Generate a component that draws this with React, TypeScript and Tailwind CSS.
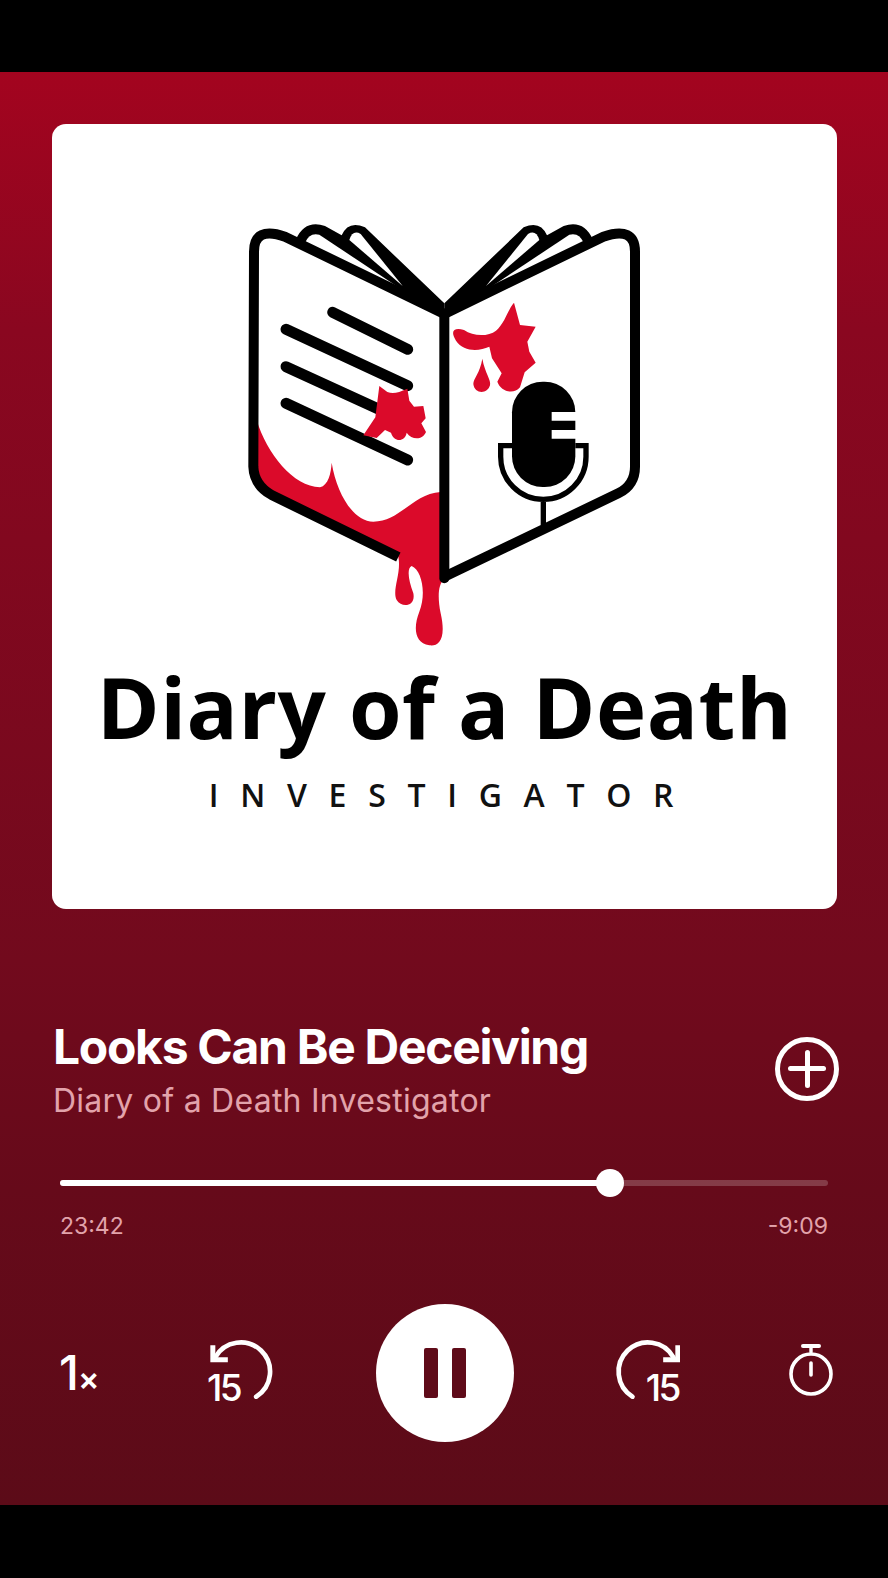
const RED = '#db0a2a';

const BookLogo = () => (
  <svg viewBox="0 0 1290 1320" className="w-[430px] h-[440px] shrink-0">
    {/* fan of pages, drawn on the left and mirrored */}
    {[false, true].map((mirror) => (
      <g key={String(mirror)} transform={mirror ? 'matrix(-1 0 0 1 1286 0)' : undefined}>
        <path d="M198 88 Q225 28 285 48 L335 76 Q355 30 405 52 L643 280 L643 325 L198 105 Z" fill="#000" />
        <path d="M224 100 Q238 66 268 74 L514 238 Z" fill="#fff" />
        <path d="M358 90 Q368 58 392 72 L518 228 Z" fill="#fff" />
      </g>
    ))}
    <path
      d="M643 312 L165 80 Q72 48 72 125 L70 770 Q72 825 125 855 L643 1100 L1165 850 Q1215 825 1215 770 L1215 125 Q1215 48 1120 80 L643 312 Z"
      fill="#fff"
    />
    {/* blood along the bottom of the left page */}
    <path
      d="M80 630 C110 730 190 830 270 832 C295 825 303 790 305 758 C320 850 370 935 430 935 C510 935 550 850 632 846 L640 1110 C625 1125 622 1160 632 1210 C650 1290 625 1310 598 1306 C552 1300 550 1250 568 1205 C590 1150 575 1080 545 1068 C530 1075 535 1110 550 1150 C558 1190 515 1195 500 1170 C485 1140 515 1090 505 1040 L120 855 L75 790 Z"
      fill={RED}
    />
    {/* cover outline, open where the blood runs over the edge */}
    <path
      d="M505 1041 L125 855 Q72 825 70 770 L72 125 Q72 48 165 80 L643 312 L1120 80 Q1215 48 1215 125 L1215 770 Q1215 825 1165 850 L643 1100"
      fill="none"
      stroke="#000"
      strokeWidth="30"
      strokeLinejoin="round"
    />
    <path d="M643 312 L643 1105" stroke="#000" strokeWidth="30" strokeLinecap="round" />
    {/* text lines */}
    <g stroke="#000" strokeWidth="33" strokeLinecap="round">
      <path d="M308 307 L533 418" />
      <path d="M168 358 L533 527" />
      <path d="M168 470 L445 597" />
      <path d="M168 580 L533 750" />
    </g>
    {/* splats */}
    <path
      d="M448 528 L472 546 C490 552 505 548 532 536 L538 572 L552 590 L580 588 L587 625 L574 640 L588 666 C577 692 545 690 530 668 C525 696 492 698 483 668 L465 660 L440 684 L400 676 L436 622 Z"
      fill={RED}
    />
    <path
      d="M852 278 L870 345 L917 350 L892 395 L898 425 L917 458 L884 487 L870 532 C850 556 812 544 802 515 L815 490 L786 445 L778 410 C745 425 700 425 678 392 C658 360 675 352 702 360 C730 380 775 380 798 362 C825 340 835 295 852 278 Z"
      fill={RED}
    />
    <path d="M757 446 C765 490 784 510 780 526 C772 554 733 552 730 522 C730 505 750 490 757 446 Z" fill={RED} />
    {/* microphone */}
    <rect x="846" y="515" width="190" height="316" rx="92" fill="#000" />
    <path d="M965 606 H1040 V632 H965 Z M965 660 H1040 V686 H965 Z" fill="#fff" />
    <path
      d="M846 707 H812 V740 A128 128 0 0 0 1068 740 V707 H1036 M940 868 V945"
      fill="none"
      stroke="#000"
      strokeWidth="16"
    />
  </svg>
);

const SkipIcon = ({ forward = false }: { forward?: boolean }) => (
  <div className="relative w-[67px] h-[65px] shrink-0 mb-[6px] text-white">
    <svg viewBox="0 0 200 195" className="w-full h-full">
      <g fill="none" stroke="currentColor" strokeLinecap="round" strokeLinejoin="miter">
        {forward ? (
          <>
            <path d="M181 58 A88 88 0 1 0 58 176" strokeWidth="14" />
            <path d="M194 22 V65 H150" strokeWidth="15" strokeLinecap="butt" />
          </>
        ) : (
          <>
            <path d="M24 58 A88 88 0 1 1 147 176" strokeWidth="14" />
            <path d="M17 22 V65 H62" strokeWidth="15" strokeLinecap="butt" />
          </>
        )}
      </g>
    </svg>
    <span
      className={`absolute bottom-[-1px] text-[37px] leading-[32px] font-medium tracking-[-2.5px] ${
        forward ? 'right-[1px]' : 'left-0'
      }`}
    >
      15
    </span>
  </div>
);

const TimerIcon = () => (
  <svg viewBox="0 0 46 56" className="w-[46px] h-[56px] shrink-0 mb-[6px]">
    <g fill="none" stroke="#fff" strokeLinecap="round">
      <circle cx="23" cy="32" r="20" strokeWidth="3.6" />
      <path d="M15 4 H31" strokeWidth="4" />
      <path d="M23 4 V10" strokeWidth="3.4" />
      <path d="M23 21 V33" strokeWidth="3.6" />
    </g>
  </svg>
);

export default function App() {
  return (
    <div className="w-[888px] h-[1578px] flex flex-col bg-black font-['Inter',sans-serif] overflow-hidden">
      <div className="h-[72px] shrink-0" />

      <main className="flex-1 flex flex-col bg-[linear-gradient(180deg,#a3041f_0%,#8a0720_18%,#720a1d_62%,#660a1a_78%,#5c0b18_100%)]">
        <div className="mt-[52px] mx-[52px] w-[785px] h-[785px] rounded-[14px] bg-white flex flex-col items-center pt-[86px]">
          <BookLogo />
          <div className="mt-[-4px] font-['Open_Sans',sans-serif] font-bold text-black text-[85px] leading-[120px] tracking-[0.5px] whitespace-nowrap">
            Diary of a Death
          </div>
          <div className="mt-[7px] font-['Open_Sans',sans-serif] font-semibold text-[#111] text-[32px] leading-[44px] tracking-[21.7px] whitespace-nowrap pl-[15px]">
            INVESTIGATOR
          </div>
        </div>

        <div className="mt-[111px] ml-[53px] mr-[49px] flex items-center justify-between">
          <div>
            <div className="text-white font-bold text-[48px] leading-[54px] tracking-[-1.3px] whitespace-nowrap">
              Looks Can Be Deceiving
            </div>
            <div className="mt-[7px] text-[#e2a3ab] text-[32px] leading-[40px] tracking-[0.25px] whitespace-nowrap">
              Diary of a Death Investigator
            </div>
          </div>
          <div className="w-[64px] h-[64px] mb-[4px] rounded-full border-[5px] border-white flex items-center justify-center relative">
            <div className="absolute w-[38px] h-[5px] rounded-full bg-white" />
            <div className="absolute w-[5px] h-[38px] rounded-full bg-white" />
          </div>
        </div>

        <div className="mt-[48px] mx-[60px]">
          <div className="relative h-[28px] flex items-center">
            <div className="w-full h-[6px] rounded-full bg-white/20 overflow-hidden">
              <div className="w-[550px] h-full bg-white" />
            </div>
            <div className="absolute left-[536px] top-0 w-[28px] h-[28px] rounded-full bg-white" />
          </div>
          <div className="mt-[15px] flex justify-between text-[#e2a3ab] text-[23px] leading-[28px]">
            <span>23:42</span>
            <span>-9:09</span>
          </div>
        </div>

        <div className="mt-[64px] ml-[59px] flex items-center">
          <div className="w-[40px] flex items-baseline text-white">
            <span className="text-[48px] leading-[50px] font-medium tracking-[-3px]">1</span>
            <span className="text-[32px] leading-[30px] font-semibold ml-[2px]">×</span>
          </div>
          <div className="ml-[108px]">
            <SkipIcon />
          </div>
          <div className="ml-[102px] w-[138px] h-[138px] rounded-full bg-white flex items-center justify-center gap-[14px]">
            <div className="w-[14px] h-[50px] rounded-[2px] bg-[#5f0b19]" />
            <div className="w-[14px] h-[50px] rounded-[2px] bg-[#5f0b19]" />
          </div>
          <div className="ml-[99px]">
            <SkipIcon forward />
          </div>
          <div className="ml-[108px]">
            <TimerIcon />
          </div>
        </div>
        <div className="flex-1" />
      </main>

      <div className="h-[73px] shrink-0" />
    </div>
  );
}
